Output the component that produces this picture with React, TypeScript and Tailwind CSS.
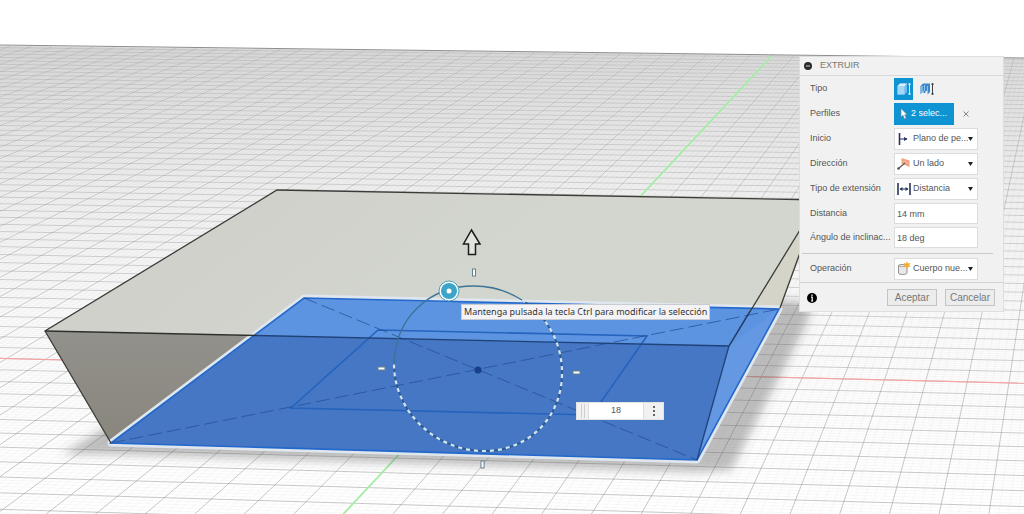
import { useId, useState } from "react";
import type { ReactNode } from "react";

// Ground plane: world units are half the width of the sketch rectangle
const CELL = 1 / 6.54;
const FAR = 8.02;
const NEAR = -2.2;

const project = (u: number, v: number) => {
  const w = 1 - 0.0101 * u + 0.107 * v;
  const x = (256.9 * u + 119.3 * v + 478) / w;
  const y = (2.6 * u - 33.3 * v + 370) / w;

  return `${x.toFixed(2)} ${y.toFixed(2)}`;
};

const gridPath = (step: number) => {
  const segments: string[] = [];

  for (let i = Math.round(-44 / step); i <= 20 / step; i++) {
    const u = i * step * CELL;
    segments.push(`M${project(u, NEAR)}L${project(u, FAR)}`);
  }
  for (let i = Math.round(-14 / step); i * step * CELL <= FAR; i++) {
    const v = i * step * CELL;
    segments.push(`M${project(-7, v)}L${project(3.2, v)}`);
  }

  return segments.join("");
};

const majorGrid = gridPath(1);
const minorGrid = gridPath(0.2);

const Scene = () => (
  <svg
    className="absolute inset-0 h-full w-full"
    viewBox="0 0 1024 514"
    preserveAspectRatio="xMidYMid slice"
    fill="none"
    aria-hidden="true"
  >
    <defs>
      <linearGradient id="floor" x1="0" y1="44" x2="0" y2="514" gradientUnits="userSpaceOnUse">
        <stop offset="0" stopColor="#e2e2e2" />
        <stop offset="0.3" stopColor="#f3f3f3" />
        <stop offset="0.6" stopColor="#fcfcfc" />
        <stop offset="1" stopColor="#ffffff" />
      </linearGradient>
      <linearGradient id="gridLine" x1="0" y1="44" x2="0" y2="514" gradientUnits="userSpaceOnUse">
        <stop offset="0" stopColor="#888" stopOpacity="0.24" />
        <stop offset="0.35" stopColor="#808080" stopOpacity="0.34" />
        <stop offset="1" stopColor="#777" stopOpacity="0.42" />
      </linearGradient>
      <linearGradient id="front" x1="0" y1="331" x2="0" y2="450" gradientUnits="userSpaceOnUse">
        <stop offset="0" stopColor="#92918b" />
        <stop offset="1" stopColor="#88857c" />
      </linearGradient>
      <linearGradient id="top" x1="277" y1="190" x2="400" y2="346" gradientUnits="userSpaceOnUse">
        <stop offset="0" stopColor="#cfd1ca" />
        <stop offset="1" stopColor="#d3d6ce" />
      </linearGradient>
      <filter id="soft" x="-10%" y="-20%" width="120%" height="140%">
        <feGaussianBlur stdDeviation="5" />
      </filter>
      <clipPath id="frontFace">
        <path d="M45 331L729 346L697 460L111 443Z" />
      </clipPath>
      <clipPath id="ground">
        <path d="M0 45.5L1024 58V514H0Z" />
      </clipPath>
    </defs>

    <g clipPath="url(#ground)">
      <rect width="1024" height="514" fill="url(#floor)" />
      <path d={minorGrid} stroke="#777" strokeOpacity="0.09" strokeWidth="0.6" />
      <path d={majorGrid} stroke="url(#gridLine)" strokeWidth="0.9" />
      <path d={`M${project(-7, 0)}L${project(3.2, 0)}`} stroke="#f3a3a3" strokeWidth="1.2" />
      <path d={`M${project(0, NEAR)}L${project(0, FAR)}`} stroke="#a5eda5" strokeWidth="1.8" />
    </g>
    <path d="M0 45L1024 58" stroke="#8d8d8d" strokeWidth="1" />

    <path
      d="M62 454L111 425L300 330L775 300L812 303L806 325L731 470L697 472L400 463L111 454Z"
      fill="#555"
      fillOpacity="0.38"
      filter="url(#soft)"
    />

    {/* solid body */}
    <path d="M277 190L822 200L780 308L697 460L729 346L45 331Z" fill="url(#top)" />
    <path d="M729 346L822 196L780 308L697 460Z" fill="#d4d4c8" />
    <path d="M45 331L729 346L697 460L111 443Z" fill="url(#front)" />

    {/* selected profile */}
    <path
      d="M111 443L304 298L779 309L697 460Z"
      fill="#5d94e2"
      stroke="#dfe6ee"
      strokeWidth="7"
      strokeLinejoin="round"
    />
    <path d="M111 443L304 298L779 309L697 460Z" fill="#5d94e2" />
    <g clipPath="url(#frontFace)">
      <path d="M111 443L304 298L779 309L697 460Z" fill="#4577c5" />
    </g>
    <path d="M729 346L779 309L697 460Z" fill="#6598e2" />
    <path d="M111 443L304 298L779 309L697 460Z" stroke="#2368cb" strokeWidth="1.6" />
    <path d="M378 330L647 336L592 415L291 408Z" stroke="#2563bd" strokeWidth="1.6" />
    <path
      d="M111 443L779 309M304 298L697 460"
      stroke="#244f96"
      strokeOpacity="0.75"
      strokeWidth="1"
      strokeDasharray="14 5"
    />

    <path
      d="M111 443L45 331L277 190L822 200M729 346L822 194M780 308L822 192"
      stroke="#3b3b38"
      strokeWidth="1.3"
    />
    <path d="M45 331L257 335.500" stroke="#2f2f2d" strokeWidth="1.3" />
    <path d="M257 335.500L729 346L697 460M729 346L750 311" stroke="#1f4279" strokeWidth="1.3" />

    {/* taper angle manipulator */}
    <path
      d="M394 364C395 318 429 286 474 286C492 286 508 291 522 300"
      stroke="#3f7397"
      strokeWidth="1.4"
    />
    <path
      d="M522 300C548 316 562 344 562 373C562 418 528 451 484 451C436 451 394 412 394 364"
      stroke="#2d5c92"
      strokeWidth="2"
    />
    <path
      d="M522 300C548 316 562 344 562 373C562 418 528 451 484 451C436 451 394 412 394 364"
      stroke="#d3e4f2"
      strokeWidth="2.200"
      strokeDasharray="4 4"
    />
    <circle cx="478" cy="370" r="3.5" fill="#173f8a" />
    <g fill="#fff" stroke="#64808d" strokeWidth="1">
      <rect x="472.500" y="269" width="3" height="7" />
      <rect x="481" y="461" width="3" height="7" />
      <rect x="378" y="367" width="7" height="3" />
      <rect x="573" y="371" width="7" height="3" />
    </g>
    <circle cx="449" cy="291" r="10" fill="#fff" stroke="#4b9dbc" strokeWidth="1" />
    <circle cx="449" cy="291" r="8" fill="#3ba4c8" />
    <circle cx="449" cy="291" r="2.500" fill="#fff" />
    <path
      d="M471.500 230L480 244H475.500V254.500H468.500V244H463.500Z"
      fill="#e2e4de"
      stroke="#1c1c1c"
      strokeWidth="1.5"
    />
  </svg>
);

const SolidIcon = () => (
  <svg className="h-4 w-4" viewBox="0 0 16 16" fill="none">
    <path d="M1.500 5L4 2.500H11V11L8.500 13.500H1.500Z" fill="#6fb9ee" />
    <path d="M1.500 5L4 2.500H11L8.500 5Z" fill="#d8effd" />
    <path d="M1.500 5H8.500V13.500H1.500Z" fill="#a5d6f8" />
    <path d="M13.500 3V13M12.500 3.500L13.500 2L14.500 3.500M12.500 12.500L13.500 14L14.500 12.500" stroke="#e6f4fc" />
  </svg>
);

const ThinIcon = () => (
  <svg className="h-4 w-4" viewBox="0 0 16 16" fill="none">
    <path d="M1.500 5L4 2.500H11V11L8.500 13.500V10H6.500V12H4.500V10L1.500 13Z" fill="#3d87cb" />
    <path d="M1.500 5H4V11L1.500 13Z" fill="#79b6e8" />
    <path d="M5.500 4V10M8.500 5V13" stroke="#8fc4ee" />
    <path d="M13.500 3V13M12.500 3.500L13.500 2L14.500 3.500M12.500 12.500L13.500 14L14.500 12.500" stroke="#3a3f4a" />
  </svg>
);

const CursorIcon = () => (
  <svg className="h-3 w-3" viewBox="0 0 12 12">
    <path d="M3 0.500V9L5 7.200L6.500 11L8.200 10.200L6.700 6.700H9.200Z" fill="#fff" stroke="#6d8391" strokeWidth="0.6" />
  </svg>
);

const StartIcon = () => (
  <svg className="h-4 w-4 shrink-0" viewBox="0 0 16 16" fill="none" stroke="#28345c">
    <path d="M3.500 2V14" strokeWidth="1.600" />
    <path d="M4 8H11" />
    <path d="M8 6L11.500 8L8 10Z" fill="#28345c" stroke="none" />
  </svg>
);

const DirectionIcon = () => (
  <svg className="h-4 w-4 shrink-0" viewBox="0 0 16 16" fill="none">
    <path d="M5.500 2L13.500 4.500V11L5.500 7.500Z" fill="#f0a27e" />
    <path d="M9 3.500V9M5.500 5L13.500 7.500" stroke="#f7c4aa" strokeWidth="0.600" />
    <path d="M2.500 12.500L9 7" stroke="#5a5a5a" strokeWidth="1.200" />
    <circle cx="2.500" cy="12.500" r="1.300" fill="#4c5a55" />
  </svg>
);

const DistanceIcon = () => (
  <svg className="h-4 w-4 shrink-0" viewBox="0 0 16 16" fill="none" stroke="#28345c">
    <path d="M2 2V14M14 2V14" strokeWidth="1.600" />
    <path d="M4 8H12" />
    <path d="M3.500 8L6.500 6V10ZM12.500 8L9.500 6V10Z" fill="#28345c" stroke="none" />
  </svg>
);

const NewBodyIcon = () => (
  <svg className="h-4 w-4 shrink-0" viewBox="0 0 16 16">
    <path d="M2.500 4.500C2.500 3.200 10.500 3.200 11 4.500V12C10.500 14 3 14 2.500 12Z" fill="#e9e9e9" stroke="#777" strokeWidth="0.800" />
    <path d="M2.500 4.500C3 6 10.500 6 11 4.500" fill="none" stroke="#8d8d8d" strokeWidth="0.700" />
    <path d="M11 0.500L12 2.500L14.500 2L13.300 4L14.500 6L12 5.700L11 8L10 5.700L7.500 6L8.700 4L7.500 2L10 2.500Z" fill="#f5ac2b" />
  </svg>
);

interface FieldProps {
  label: string;
  htmlFor?: string;
  children: ReactNode;
}

const Field = ({ label, htmlFor, children }: FieldProps) => (
  <div className="flex items-center">
    <label htmlFor={htmlFor} className="w-[84px] shrink-0 truncate">
      {label}
    </label>
    {children}
  </div>
);

interface SelectFieldProps {
  label: string;
  value: string;
  icon: ReactNode;
}

const SelectField = ({ label, value, icon }: SelectFieldProps) => {
  const id = useId();

  return (
    <Field label={label} htmlFor={id}>
      <div className="flex h-[22px] w-[84px] items-center border border-[#dcdcdc] bg-white pl-px">
        {icon}
        <select id={id} className="ml-px min-w-0 flex-1 appearance-none bg-transparent">
          <option>{value}</option>
        </select>
        <svg className="pointer-events-none mr-1 h-1 w-[5px] shrink-0" viewBox="0 0 5 4">
          <path d="M0 0H5L2.500 4Z" fill="#222" />
        </svg>
      </div>
    </Field>
  );
};

interface TextFieldProps {
  label: string;
  initial: string;
}

const TextField = ({ label, initial }: TextFieldProps) => {
  const id = useId();
  const [value, setValue] = useState(initial);

  return (
    <Field label={label} htmlFor={id}>
      <input
        id={id}
        value={value}
        onChange={(e) => setValue(e.target.value)}
        className="h-[21px] w-[84px] border border-[#dcdcdc] bg-white px-0.5"
      />
    </Field>
  );
};

const ExtrudePanel = () => (
  <section className="relative w-[205px] border border-[#dedede] bg-[#f1f1f1] text-[9px] text-[#555]">
    <header className="flex h-[19px] items-center gap-2 border-b border-[#dadada] pl-1">
      <svg className="h-2 w-2" viewBox="0 0 8 8">
        <circle cx="4" cy="4" r="4" fill="#2b2b2b" />
        <path d="M2 4H6" stroke="#ccc" />
      </svg>
      <h2 className="text-[#777]">EXTRUIR</h2>
    </header>

    <div className="flex flex-col gap-[3px] px-2.5 pt-0.5 pb-[5px]">
      <Field label="Tipo">
        <div className="flex gap-1">
          <button aria-label="Extrusión" className="flex h-[22px] w-[19px] items-center justify-center bg-[#0e93d3]">
            <SolidIcon />
          </button>
          <button aria-label="Extrusión fina" className="flex h-[22px] w-[19px] items-center justify-center">
            <ThinIcon />
          </button>
        </div>
      </Field>
      <Field label="Perfiles">
        <button className="flex h-[22px] w-[60px] items-center gap-px bg-[#0e93d3] pl-1 text-white">
          <CursorIcon />2 selec...
        </button>
        <button aria-label="Quitar selección" className="ml-2 p-px">
          <svg className="h-1.5 w-1.5" viewBox="0 0 6 6" stroke="#777" strokeWidth="0.9">
            <path d="M0.500 0.500L5.500 5.500M5.500 0.500L0.500 5.500" />
          </svg>
        </button>
      </Field>
      <SelectField label="Inicio" value="Plano de pe..." icon={<StartIcon />} />
      <SelectField label="Dirección" value="Un lado" icon={<DirectionIcon />} />
      <SelectField label="Tipo de extensión" value="Distancia" icon={<DistanceIcon />} />
      <TextField label="Distancia" initial="14 mm" />
      <TextField label="Ángulo de inclinac..." initial="18 deg" />
    </div>

    <hr className="ml-0.5 mr-2.5 border-[#c9c9c9]" />
    <div className="px-2.5 pt-1 pb-0.5">
      <SelectField label="Operación" value="Cuerpo nue..." icon={<NewBodyIcon />} />
    </div>

    <footer className="flex items-center gap-2 border-t border-[#d3d3d3] pt-1.5 pb-[5px] pl-[7px] pr-2 text-[10px] text-[#777]">
      <svg className="mr-auto h-2.5 w-2.5" viewBox="0 0 10 10">
        <circle cx="5" cy="5" r="5" fill="#000" />
        <path d="M5 1.500V3M4 4.200H5.200V7.800M4 8H6.200" stroke="#fff" strokeWidth="1.200" />
      </svg>
      <button className="flex h-[17px] w-[50px] items-center justify-center border border-[#c4c4c4] bg-[#ececec]">
        Aceptar
      </button>
      <button className="flex h-[17px] w-[50px] items-center justify-center border border-[#c4c4c4] bg-[#ececec]">
        Cancelar
      </button>
    </footer>
  </section>
);

const AngleInput = () => {
  const [angle, setAngle] = useState("18");

  return (
    <div className="absolute left-[576px] top-[402px] flex h-[18px] w-[88px] border border-[#e2e2e2] bg-[#f1f1f1] text-[9px] text-[#555]">
      <span className="my-px ml-1 w-1 border-x border-[#cfcfcf]" />
      <input
        aria-label="Ángulo"
        value={angle}
        onChange={(e) => setAngle(e.target.value)}
        className="ml-[3px] w-14 border-x border-[#dedede] bg-white text-center"
      />
      <button aria-label="Más opciones" className="flex flex-1 items-center justify-center">
        <svg className="h-3 w-1" viewBox="0 0 4 12" fill="#666">
          <path d="M1 1H3V3H1ZM1 5H3V7H1ZM1 9H3V11H1Z" />
        </svg>
      </button>
    </div>
  );
};

const App = () => (
  <main className="relative flex min-h-screen items-start justify-end overflow-hidden bg-white pr-5 pt-14 font-['Liberation_Sans',Arial,sans-serif]">
    <Scene />
    <div
      role="tooltip"
      className="absolute left-[461px] top-[304px] flex h-4 items-center whitespace-nowrap border border-[#c8ccd2] bg-[#f3f3f5] px-0.5 font-['Noto_Sans',sans-serif] text-[9px] text-[#333]"
    >
      Mantenga pulsada la tecla Ctrl para modificar la selección
    </div>
    <AngleInput />
    <ExtrudePanel />
  </main>
);

export default App;
